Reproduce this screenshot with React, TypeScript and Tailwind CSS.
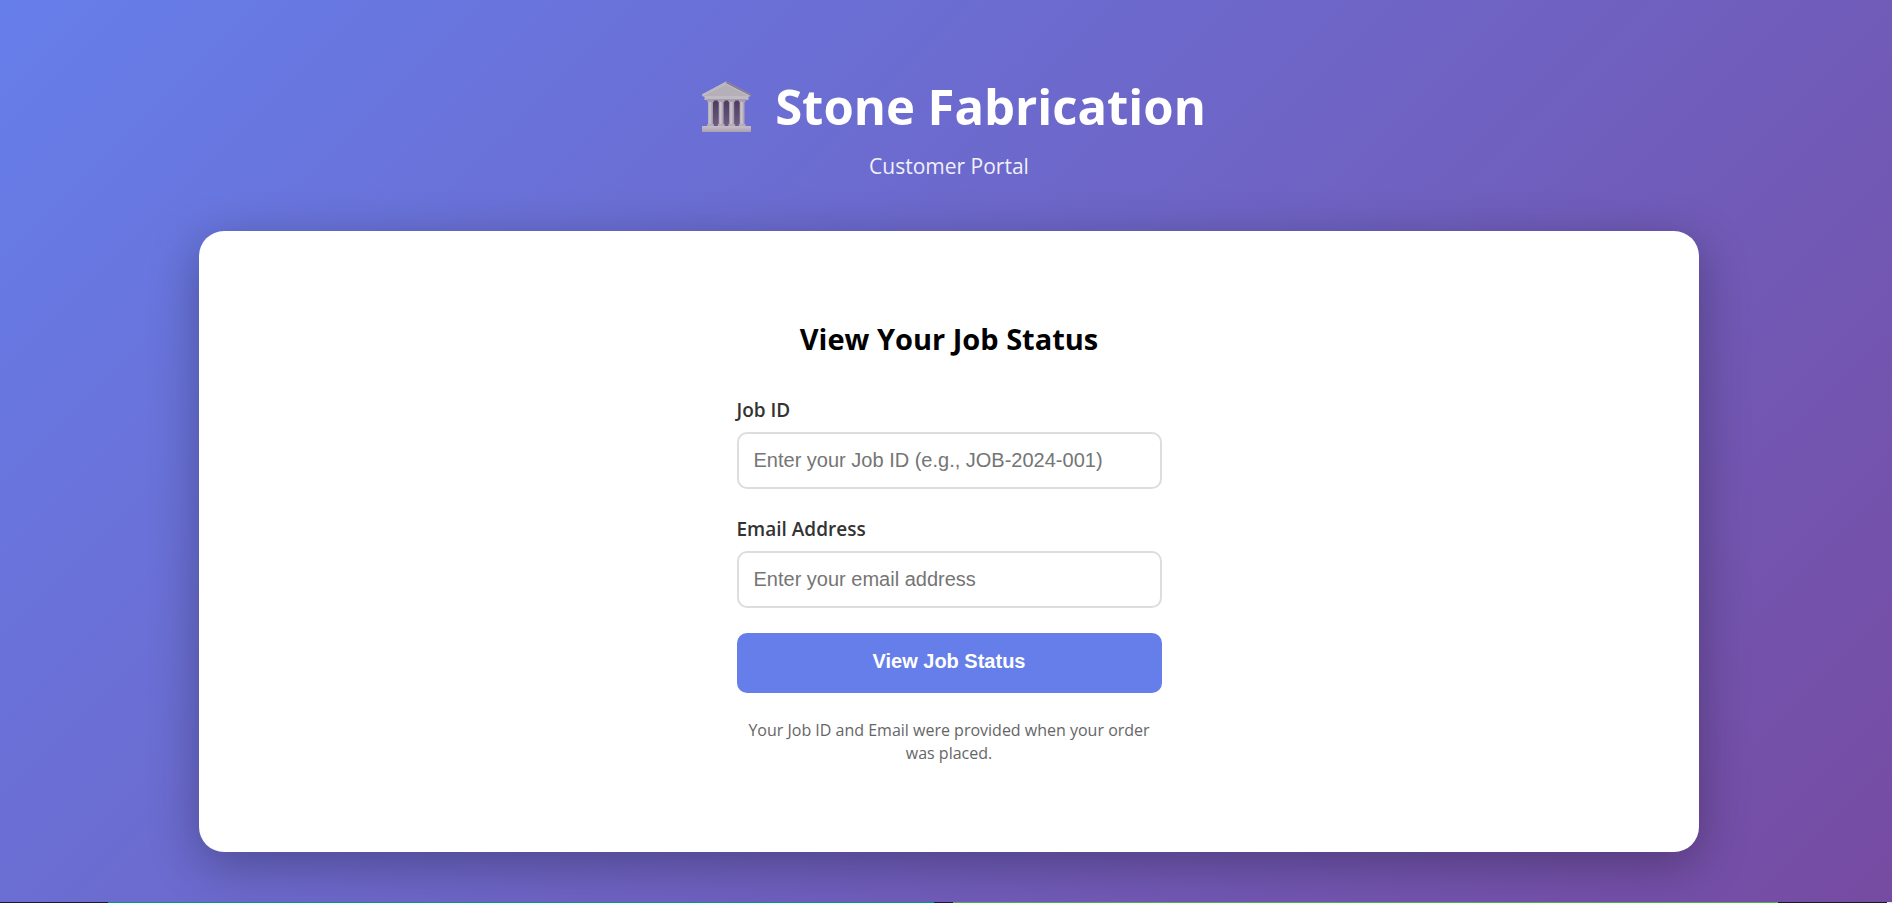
import React from "react";

function TempleIcon() {
  return (
    <svg viewBox="0 0 49 51" className="h-[51px] w-[49px] shrink-0" aria-hidden="true">
      <defs>
        <linearGradient id="column" x1="0" x2="1" y1="0" y2="0">
          <stop offset="0" stopColor="#b3a8b8" />
          <stop offset="0.4" stopColor="#cbc6cf" />
          <stop offset="1" stopColor="#9d93a6" />
        </linearGradient>
        <linearGradient id="hall" x1="0" x2="0" y1="0" y2="1">
          <stop offset="0" stopColor="#4c3b5c" />
          <stop offset="1" stopColor="#6d5c84" />
        </linearGradient>
        <linearGradient id="base" x1="0" x2="0" y1="0" y2="1">
          <stop offset="0" stopColor="#c6bfca" />
          <stop offset="1" stopColor="#aaa0b0" />
        </linearGradient>
      </defs>
      <rect x="10" y="19" width="30" height="26" fill="url(#hall)" />
      <path d="M24.5 0.5 L49 13.5 V15 L46.5 16 H2.5 L0 15 V13.5 Z" fill="#b5afb8" />
      <path d="M24.5 0.5 L49 13.5 V15 L24 2.2 Z" fill="#887b90" />
      <path d="M24 1 L0.5 13.6 H3 L24 3 L46 14.5" fill="none" stroke="#c8c2cb" strokeWidth="0.8" />
      <rect x="2.5" y="15" width="44" height="4" rx="0.5" fill="#c0bac4" />
      <rect x="4.5" y="18.5" width="40" height="1.2" fill="#8d8198" />
      {[6, 16.7, 27.2, 37.7].map((x) => (
        <g key={x}>
          <rect x={x} y="20" width="5" height="25" fill="url(#column)" />
          <rect x={x - 1} y="19" width="7" height="2" rx="0.7" fill="#aaa0b0" />
          <rect x={x - 1} y="43" width="7" height="2" rx="0.7" fill="#b5acba" />
        </g>
      ))}
      <rect x="0" y="45" width="49" height="6" rx="0.7" fill="url(#base)" />
    </svg>
  );
}

type FieldProps = { id: string; label: string; type: string; placeholder: string };

function Field({ id, label, type, placeholder }: FieldProps) {
  return (
    <div className="flex flex-col gap-2.5">
      <label htmlFor={id} className="text-[19px] leading-6 font-semibold text-[#333333]">
        {label}
      </label>
      <input
        id={id}
        type={type}
        placeholder={placeholder}
        className="h-[57px] w-full rounded-[10px] border-2 border-[#dddddd] bg-white px-[15px] font-['Liberation_Sans',Arial,sans-serif] text-xl text-black placeholder:text-[#757575]"
      />
    </div>
  );
}

export default function App() {
  return (
    <div className="flex min-h-screen flex-col bg-[linear-gradient(135deg,#667eea_0%,#764ba2_100%)] font-['Segoe_UI','Open_Sans','Noto_Sans',sans-serif]">
      <main className="mx-auto w-full max-w-[1506px] grow pt-[71px] pb-12 pl-1.5">
        <header className="flex flex-col items-center text-white">
          <h1 className="flex items-center gap-6 pl-2.5 text-[49px] leading-[70px] font-bold">
            <TempleIcon />
            <span>Stone Fabrication</span>
          </h1>
          <p className="mt-2.5 text-[21px] leading-[30px] opacity-90">Customer Portal</p>
        </header>

        <section className="mt-[50px] rounded-[25px] bg-white px-12 pt-[89px] pb-[87px] shadow-[0_12px_50px_rgba(0,0,0,0.3)]">
          <form className="mx-auto flex max-w-[425px] flex-col" onSubmit={(e) => e.preventDefault()}>
            <h2 className="mb-10 text-center text-[29px] leading-[38px] font-bold text-black">
              View Your Job Status
            </h2>
            <div className="flex flex-col gap-7">
              <Field id="job-id" label="Job ID" type="text" placeholder="Enter your Job ID (e.g., JOB-2024-001)" />
              <Field id="email" label="Email Address" type="email" placeholder="Enter your email address" />
            </div>
            <button
              type="submit"
              className="mt-[25px] h-[60px] w-full cursor-pointer rounded-[10px] bg-[#667eea] pb-1 font-['Liberation_Sans',Arial,sans-serif] text-xl font-bold text-white"
            >
              View Job Status
            </button>
            <p className="mt-[26px] text-center text-[16px] leading-[23px] text-[#666666]">
              Your Job ID and Email were provided when your order was placed.
            </p>
          </form>
        </section>
      </main>

      <div className="flex h-px w-full" aria-hidden="true">
        <div className="w-[108px] bg-[#1a1a2e]" />
        <div className="grow basis-0 bg-[#009688]" />
        <div className="w-[19px] bg-[#1a1a3e]" />
        <div className="grow basis-0 bg-[#4caf50]" />
        <div className="w-[109px] bg-[#1a1a2e]" />
        <div className="w-[5px] bg-[#e5e5e5]" />
      </div>
    </div>
  );
}
